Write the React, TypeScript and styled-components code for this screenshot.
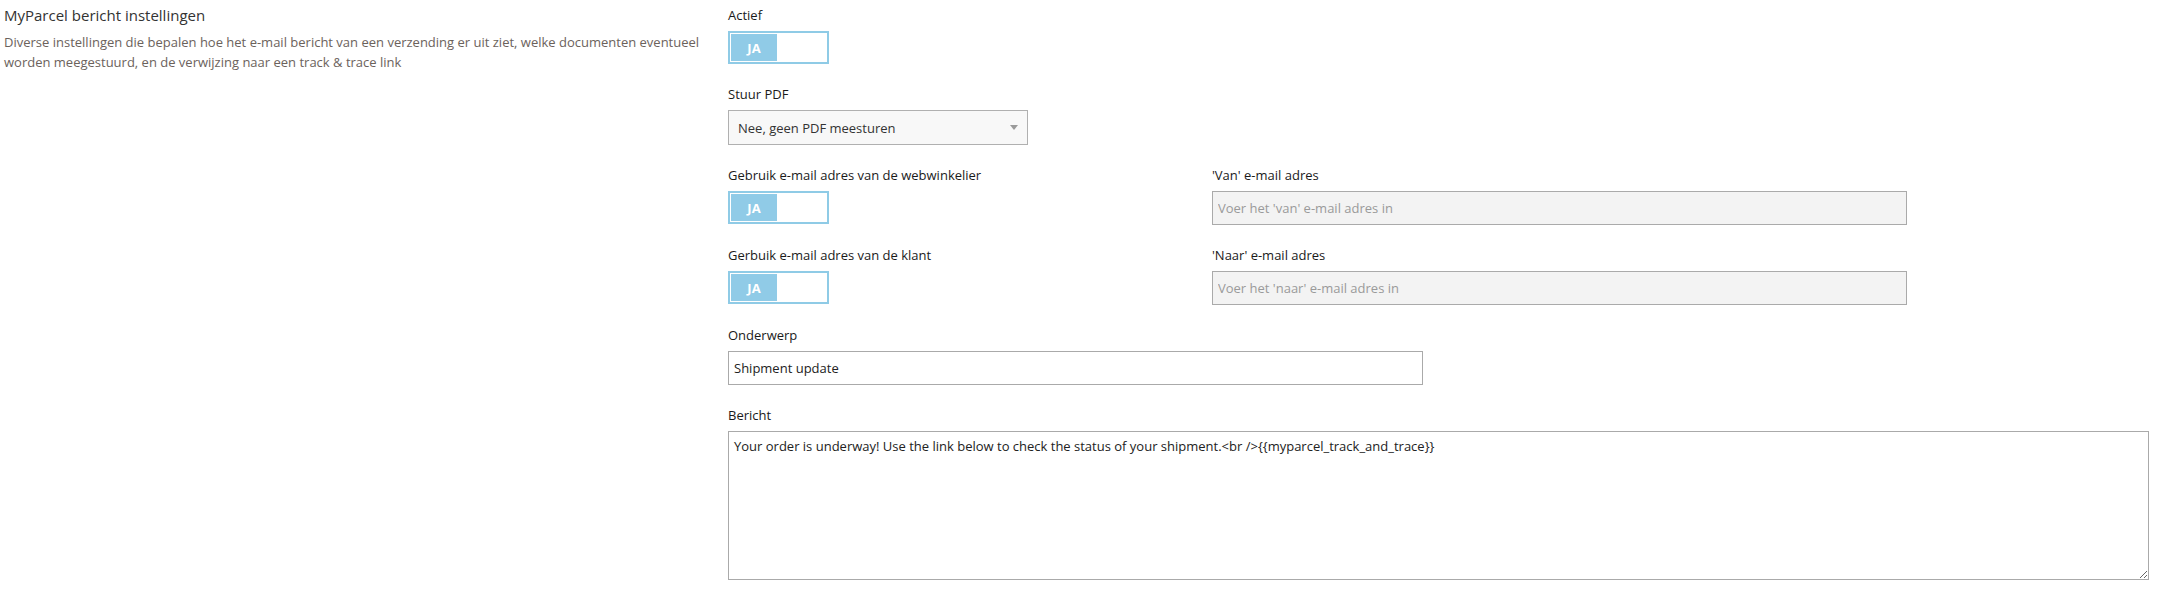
import React from "react";
import styled, { createGlobalStyle } from "styled-components";

const GlobalStyle = createGlobalStyle`
  html, body {
    margin: 0;
    padding: 0;
    background: #ffffff;
  }
  body {
    font-family: "Open Sans", "Noto Sans", Arial, sans-serif;
    color: #222;
  }
  * { box-sizing: border-box; }
`;

const Page = styled.div`
  display: flex;
  width: 2157px;
  min-height: 590px;
  padding-right: 8px;
`;

const Intro = styled.aside`
  width: 728px;
  flex: 0 0 728px;
  padding: 5px 0 0 4px;
`;

const Title = styled.h2`
  margin: 0;
  font-size: 15px;
  line-height: 20px;
  font-weight: 400;
  color: #333;
`;

const Description = styled.p`
  margin: 7px 0 0;
  font-size: 13px;
  line-height: 20px;
  color: #6b625c;
  width: 722px;
`;

const Form = styled.div`
  flex: 1;
  display: flex;
  flex-direction: column;
`;

const Row = styled.div`
  display: flex;
`;

const Group = styled.div<{ $w?: number }>`
  display: flex;
  flex-direction: column;
  padding-top: 5px;
  margin-bottom: 15px;
  width: ${(p) => (p.$w ? `${p.$w}px` : "100%")};
`;

const Label = styled.label`
  font-size: 13px;
  line-height: 20px;
  color: #1a1a1a;
  margin-bottom: 6px;
`;

const Toggle = styled.div`
  width: 101px;
  height: 33px;
  border: 2px solid #8fcbe6;
  padding: 1px;
  display: flex;
  background: #fff;
`;

const Knob = styled.span`
  width: 46px;
  height: 100%;
  background: #90cbe7;
  color: #fff;
  font-size: 13px;
  font-weight: 700;
  display: flex;
  align-items: center;
  justify-content: center;
`;

const SelectWrap = styled.div`
  position: relative;
  width: 300px;
  height: 35px;
`;

const Select = styled.select`
  appearance: none;
  -webkit-appearance: none;
  width: 100%;
  height: 100%;
  border: 1px solid #b0b0b0;
  background: #f8f8f8;
  font-family: "Open Sans", "Noto Sans", Arial, sans-serif;
  font-size: 13px;
  color: #333;
  padding: 0 24px 0 9px;
  border-radius: 0;
  outline: none;
`;

const Caret = styled.span`
  position: absolute;
  right: 10px;
  top: 15px;
  width: 0;
  height: 0;
  border-left: 4px solid transparent;
  border-right: 4px solid transparent;
  border-top: 5px solid #9a9a9a;
  pointer-events: none;
`;

const Input = styled.input<{ $disabled?: boolean }>`
  width: 695px;
  height: 34px;
  border: 1px solid #aaa;
  background: ${(p) => (p.$disabled ? "#f3f3f3" : "#fff")};
  font-family: "Open Sans", "Noto Sans", Arial, sans-serif;
  font-size: 13px;
  color: #222;
  padding: 0 5px;
  border-radius: 0;
  outline: none;
  &::placeholder {
    color: #9a9a9a;
  }
`;

const TextArea = styled.textarea`
  width: 100%;
  height: 149px;
  border: 1px solid #aaa;
  background: #fff;
  font-family: "Open Sans", "Noto Sans", Arial, sans-serif;
  font-size: 13px;
  line-height: 18px;
  color: #222;
  padding: 5px 5px;
  border-radius: 0;
  outline: none;
`;

const YesToggle = () => (
  <Toggle>
    <Knob>JA</Knob>
  </Toggle>
);

export default function App() {
  return (
    <>
      <GlobalStyle />
      <Page>
        <Intro>
          <Title>MyParcel bericht instellingen</Title>
          <Description>
            Diverse instellingen die bepalen hoe het e-mail bericht van een verzending er uit ziet, welke documenten eventueel
            worden meegestuurd, en de verwijzing naar een track &amp; trace link
          </Description>
        </Intro>
        <Form>
          <Group>
            <Label>Actief</Label>
            <YesToggle />
          </Group>
          <Group>
            <Label>Stuur PDF</Label>
            <SelectWrap>
              <Select defaultValue="none">
                <option value="none">Nee, geen PDF meesturen</option>
              </Select>
              <Caret />
            </SelectWrap>
          </Group>
          <Row>
            <Group $w={484}>
              <Label>Gebruik e-mail adres van de webwinkelier</Label>
              <YesToggle />
            </Group>
            <Group $w={695}>
              <Label>'Van' e-mail adres</Label>
              <Input $disabled placeholder="Voer het 'van' e-mail adres in" readOnly />
            </Group>
          </Row>
          <Row>
            <Group $w={484}>
              <Label>Gerbuik e-mail adres van de klant</Label>
              <YesToggle />
            </Group>
            <Group $w={695}>
              <Label>'Naar' e-mail adres</Label>
              <Input $disabled placeholder="Voer het 'naar' e-mail adres in" readOnly />
            </Group>
          </Row>
          <Group>
            <Label>Onderwerp</Label>
            <Input defaultValue="Shipment update" />
          </Group>
          <Group>
            <Label>Bericht</Label>
            <TextArea defaultValue="Your order is underway! Use the link below to check the status of your shipment.<br />{{myparcel_track_and_trace}}" />
          </Group>
        </Form>
      </Page>
    </>
  );
}
